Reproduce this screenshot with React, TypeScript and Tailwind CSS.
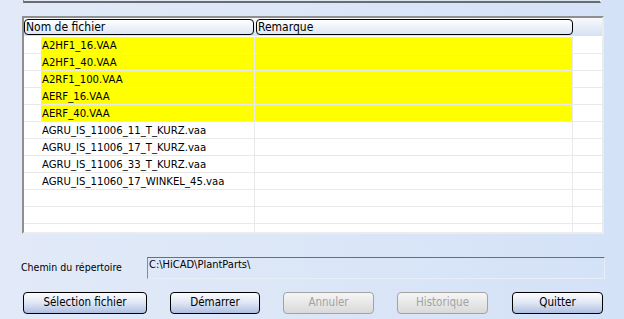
const font = { fontFamily: '"DejaVu Sans Condensed", "DejaVu Sans", sans-serif', fontStretch: 'condensed' as const };

const files = [
  { name: 'A2HF1_16.VAA', marked: true },
  { name: 'A2HF1_40.VAA', marked: true },
  { name: 'A2RF1_100.VAA', marked: true },
  { name: 'AERF_16.VAA', marked: true },
  { name: 'AERF_40.VAA', marked: true },
  { name: 'AGRU_IS_11006_11_T_KURZ.vaa', marked: false },
  { name: 'AGRU_IS_11006_17_T_KURZ.vaa', marked: false },
  { name: 'AGRU_IS_11006_33_T_KURZ.vaa', marked: false },
  { name: 'AGRU_IS_11060_17_WINKEL_45.vaa', marked: false },
  { name: '', marked: false },
  { name: '', marked: false },
  { name: '', marked: false },
];

const Button = ({ label, width, disabled = false }: { label: string; width: string; disabled?: boolean }) => (
  <button
    className={
      disabled
        ? `${width} h-[22px] rounded-[4px] border border-[#a3a3a3] bg-gradient-to-b from-[#f6f6f6] to-[#d9d9d9] text-[11.5px] text-[#a3a3a3]`
        : `${width} h-[22px] rounded-[4px] border border-black bg-gradient-to-b from-[#fbfcfe] via-[#dfe6f4] to-[#aebfe2] text-[11.5px] text-black`
    }
  >
    {label}
  </button>
);

const App = () => {
  return (
    <div
      className="w-[624px] h-[319px] overflow-hidden bg-gradient-to-r from-[#e2eaf8] to-[#d4e2f7] text-black"
      style={font}
    >
      {/* strip of the panel above */}
      <div className="ml-[23px] w-[578px] h-[3px] border-l border-l-[#8a8a8a] border-b-2 border-b-[#6b6b6b] border-r border-r-white" />

      {/* file list */}
      <div className="mt-[13px] ml-[22px] w-[582px] h-[218px] overflow-hidden border-2 border-t-[#8f8f8f] border-l-[#8f8f8f] border-b-[#ececec] border-r-[#ececec] bg-white">
        <div className="flex h-[18px] items-center gap-[2px] bg-gradient-to-b from-[#f7f9fd] to-[#d6e1f2]">
          <div className="w-[230px] h-[16px] rounded-[4px] border border-black bg-gradient-to-b from-white to-[#dde6f4] pl-[1px] text-[12px] leading-[14px]">
            Nom de fichier
          </div>
          <div className="w-[317px] h-[16px] rounded-[4px] border border-black bg-gradient-to-b from-white to-[#dde6f4] pl-[1px] text-[12px] leading-[14px]">
            Remarque
          </div>
        </div>
        <div className="h-px bg-white" />
        {files.map((f, i) => (
          <div key={i} className="flex h-[17px] border-b border-[#e9e9e9]">
            <div className="w-[17px] shrink-0" />
            <div
              className={`w-[214px] shrink-0 border-r border-[#e9e9e9] pl-[1px] text-[11.25px] leading-[17px] ${f.marked ? 'bg-[#ffff00]' : ''}`}
            >
              {f.name}
            </div>
            <div className={`w-[318px] shrink-0 border-r border-[#e9e9e9] ${f.marked ? 'bg-[#ffff00]' : ''}`} />
            <div className="flex-1" />
          </div>
        ))}
      </div>

      {/* directory */}
      <div className="mt-[23px] flex items-center">
        <span className="ml-[21px] w-[126px] text-[10.5px]">Chemin du répertoire</span>
        <div className="w-[458px] h-[22px] border border-t-[#6e6e6e] border-l-[#8a8a8a] border-b-[#e8eef8] border-r-[#e8eef8] pl-[1px] text-[11px] leading-[13px]">
          C:\HiCAD\PlantParts\
        </div>
      </div>

      {/* actions */}
      <div className="mt-[10px] flex">
        <div className="ml-[23px]">
          <Button label="Sélection fichier" width="w-[124px]" />
        </div>
        <div className="ml-[23px]">
          <Button label="Démarrer" width="w-[90px]" />
        </div>
        <div className="ml-[23px]">
          <Button label="Annuler" width="w-[91px]" disabled />
        </div>
        <div className="ml-[23px]">
          <Button label="Historique" width="w-[91px]" disabled />
        </div>
        <div className="ml-[24px]">
          <Button label="Quitter" width="w-[91px]" />
        </div>
      </div>
    </div>
  );
};

export default App;
